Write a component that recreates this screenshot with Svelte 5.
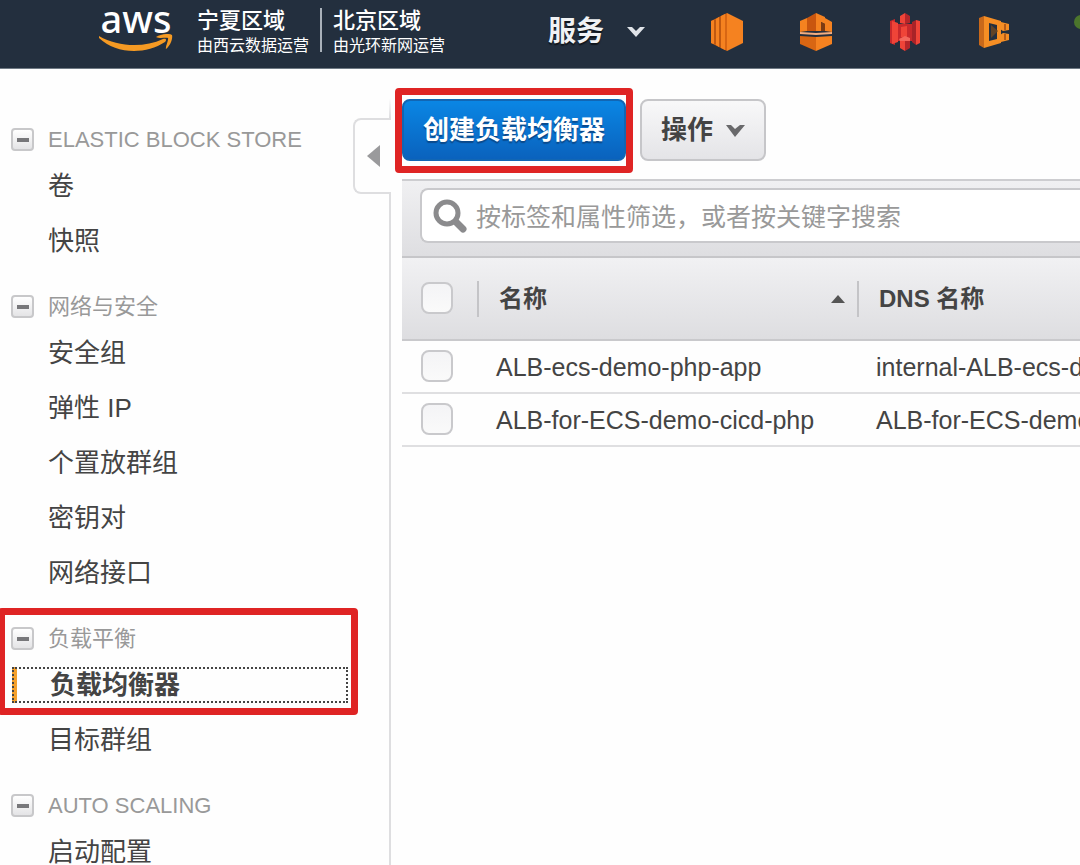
<script>
  let query = $state("");

  const regions = [
    { name: "宁夏区域", operator: "由西云数据运营" },
    { name: "北京区域", operator: "由光环新网运营" },
  ];

  const groups = [
    { title: "ELASTIC BLOCK STORE", items: ["卷", "快照"] },
    {
      title: "网络与安全",
      items: ["安全组", "弹性 IP", "个置放群组", "密钥对", "网络接口"],
    },
    {
      title: "负载平衡",
      items: ["负载均衡器", "目标群组"],
      marked: true,
    },
    { title: "AUTO SCALING", items: ["启动配置"] },
  ];

  const active = "负载均衡器";

  const balancers = [
    { name: "ALB-ecs-demo-php-app", dns: "internal-ALB-ecs-d" },
    { name: "ALB-for-ECS-demo-cicd-php", dns: "ALB-for-ECS-demo" },
  ];
</script>

<div class="console">
  <header>
    <a class="logo" href="#home" aria-label="aws">
      <span>aws</span>
      <svg width="76" height="20" viewBox="0 0 76 20">
        <path
          d="M1 2 C20 13 46 14 65 5 C68 4 69 6 67 8 C47 21 18 20 1 4 Z"
          fill="#f59a23"
        />
        <path
          d="M58 3 C63 0 71 -1 74 1 C75 5 72 12 68 15 C67 13 71 6 70 4 C68 3 62 5 58 3 Z"
          fill="#f59a23"
        />
      </svg>
    </a>
    <div class="regions">
      {#each regions as region}
        <div class="region">
          <strong>{region.name}</strong>
          <small>{region.operator}</small>
        </div>
      {/each}
    </div>
    <button class="services">
      服务
      <svg width="18" height="11" viewBox="0 0 18 11">
        <path d="M0 0 H5 L9 4 L13 0 H18 L9 10 Z" fill="#dfe3e8" />
      </svg>
    </button>
    <nav class="shortcuts" aria-label="快捷方式">
      <a href="#ec2" aria-label="EC2">
        <svg width="34" height="40" viewBox="0 0 34 40">
          <path d="M17 1 L1 9 V31 L17 39 Z" fill="#d86613" />
          <path d="M17 1 L33 9 V31 L17 39 Z" fill="#f58220" />
          <path d="M1 9 L4 8 V32 L1 31 Z M6 7 L9 5 V35 L6 33 Z" fill="#f58220" />
          <path d="M11 4 L15 2 V38 L11 36 Z" fill="#f58220" />
          <path d="M5 8 V32 M10 5 V35" stroke="#a84c10" />
        </svg>
      </a>
      <a href="#vpc" aria-label="VPC">
        <svg width="34" height="40" viewBox="0 0 34 40">
          <path d="M1 9 L8 6 V19 L1 20 Z" fill="#f58220" />
          <path d="M8 6 L17 1 V19 H8 Z" fill="#c9560f" />
          <path d="M17 1 L26 5 V12 L22 10 V19 H17 Z" fill="#f58220" />
          <path d="M22 10 L26 12 V19 H22 Z" fill="#7d3b12" />
          <path d="M26 6 L33 10 V20 L26 19 Z" fill="#f58220" />
          <path d="M1 20 L17 21 L33 20 V22 L17 23 L1 22 Z" fill="#f3ae80" />
          <path d="M1 24 L17 25 V39 L1 32 Z" fill="#d86613" />
          <path d="M17 25 L33 24 V32 L17 39 Z" fill="#f58220" />
        </svg>
      </a>
      <a href="#s3" aria-label="S3">
        <svg width="34" height="40" viewBox="0 0 34 40">
          <path d="M2 9 L7 7 V33 L2 31 Z" fill="#c8292c" />
          <path d="M4 9 L10 11 V30 L4 32 Z" fill="#ef4438" />
          <path d="M10 12 H24 V29 H10 Z" fill="#c8292c" />
          <path d="M24 10 L28 8 V33 L24 30 Z" fill="#a92328" />
          <path d="M28 8 L32 9 V31 L28 33 Z" fill="#ef4438" />
          <path d="M12 4 L17 1 V12 L12 11 Z M12 29 L17 28 V39 L12 36 Z" fill="#ef4438" />
          <path d="M17 1 L22 4 V11 L17 12 Z M17 28 L22 29 V36 L17 39 Z" fill="#b5262a" />
          <path d="M13 15 L19 14 V26 L13 25 Z" fill="#ef4438" />
          <path d="M11 27 L17 24 L22 26 V29 H12 Z" fill="#f4675c" />
        </svg>
      </a>
      <a href="#ecs" aria-label="ECS">
        <svg width="34" height="40" viewBox="0 0 34 40">
          <path d="M2 6 L7 4 V36 L2 33 Z" fill="#c9691a" />
          <path
            fill-rule="evenodd"
            d="M7 4 L24 9 V31 L7 36 Z M12 11 V29 L20 27 V13 Z"
            fill="#f58e24"
          />
          <path d="M14 13 L21 19 L14 26 Z" fill="#604326" />
          <path d="M24 10 L32 12 V18 L26 19 L23 17 Z" fill="#f58e24" />
          <path d="M24 30 L32 28 V22 L26 21 L23 23 Z" fill="#f58e24" />
          <path d="M28 12 V18 M28 22 V28" stroke="#b65b17" stroke-width="2" />
        </svg>
      </a>
      <a href="#more" aria-label="IoT">
        <svg width="34" height="40" viewBox="0 0 34 40">
          <path d="M17 16 V36" stroke="#3f5a45" stroke-width="4" />
          <circle cx="15" cy="10" r="7" fill="#4c762c" />
        </svg>
      </a>
    </nav>
  </header>

  <div class="body">
    <aside>
      {#each groups as group}
        <section class:marked={group.marked}>
          <h2>
            <button class="fold" aria-label="折叠 {group.title}"></button>
            {group.title}
          </h2>
          <ul>
            {#each group.items as item}
              <li>
                <a href="#{item}" class:active={item === active}>{item}</a>
              </li>
            {/each}
          </ul>
        </section>
      {/each}
      <button class="collapse" aria-label="收起">
        <svg width="13" height="22" viewBox="0 0 13 22">
          <path d="M13 0 V22 L0 11 Z" fill="#9a9a9c" />
        </svg>
      </button>
    </aside>

    <main>
      <div class="actions">
        <div class="callout">
          <button class="btn primary">创建负载均衡器</button>
        </div>
        <button class="btn">
          操作
          <svg width="19" height="13" viewBox="0 0 19 13">
            <path d="M0 1 H5 L9 5 L14 1 H19 L9 13 Z" fill="#69696b" />
          </svg>
        </button>
      </div>

      <div class="filter">
        <label class="search">
          <svg width="36" height="36" viewBox="0 0 36 36" fill="none" stroke="#8b8b8d">
            <circle cx="15" cy="15" r="11" stroke-width="5" />
            <path d="M24 24 L31 31" stroke-width="7" stroke-linecap="round" />
          </svg>
          <input
            type="text"
            bind:value={query}
            aria-label="搜索"
            placeholder="按标签和属性筛选，或者按关键字搜索"
          />
        </label>
      </div>

      <table>
        <thead>
          <tr>
            <th class="check"><input type="checkbox" aria-label="全选" /></th>
            <th class="name">
              <div class="cell">
                名称
                <svg width="14" height="8" viewBox="0 0 14 8">
                  <path d="M7 0 L14 8 H0 Z" fill="#555" />
                </svg>
              </div>
            </th>
            <th><div class="cell">DNS 名称</div></th>
          </tr>
        </thead>
        <tbody>
          {#each balancers as balancer}
            <tr>
              <td class="check">
                <input type="checkbox" aria-label={balancer.name} />
              </td>
              <td>{balancer.name}</td>
              <td>{balancer.dns}</td>
            </tr>
          {/each}
        </tbody>
      </table>
    </main>
  </div>
</div>

<style>
  :global(body) {
    background: #fefefe;
  }

  .console {
    display: flex;
    flex-direction: column;
    height: 100vh;
    overflow: hidden;
    font-family: "Liberation Sans", "Noto Sans CJK SC", sans-serif;
    color: #444;
  }

  button,
  input {
    font-family: inherit;
    color: inherit;
  }

  a {
    color: inherit;
    text-decoration: none;
  }

  svg {
    display: block;
    flex: none;
  }

  /* top bar */
  header {
    display: flex;
    flex: none;
    height: 69px;
    box-sizing: border-box;
    padding-left: 98px;
    overflow: hidden;
    background: #232f3e;
    border-bottom: 1px solid #6f7a84;
    color: #fff;
  }

  .logo {
    width: 76px;
    flex: none;
    text-align: center;
  }

  .logo span {
    display: block;
    height: 34px;
    font: 500 38px/36px "Noto Sans", sans-serif;
  }

  .regions {
    display: flex;
    flex: none;
    width: 351px;
    padding: 8px 0 0 23px;
  }

  .region {
    height: 44px;
    white-space: nowrap;
  }

  .region + .region {
    margin-left: 11px;
    padding-left: 11px;
    border-left: 2px solid #a9b1ba;
  }

  .region strong,
  .region small {
    display: block;
    font-size: 22px;
    font-weight: 500;
    line-height: 25px;
  }

  .region small {
    font-size: 16px;
    font-weight: 400;
  }

  .services {
    display: flex;
    flex: none;
    align-items: center;
    gap: 23px;
    width: 162px;
    height: 64px;
    padding: 0;
    border: 0;
    background: none;
    font-size: 28px;
    font-weight: 700;
    line-height: 36px;
    color: #f0f2f4;
    text-shadow: 0 2px 1px #10161d;
  }

  .shortcuts {
    display: flex;
    align-items: center;
    gap: 55px;
    height: 64px;
  }

  .body {
    display: flex;
    flex: 1;
    min-height: 0;
  }

  /* navigation */
  aside {
    position: relative;
    flex: none;
    box-sizing: border-box;
    width: 391px;
    padding-top: 52px;
    border-right: 2px solid #dedee0;
    border-image: linear-gradient(transparent 30px, #dedee0 50px) 1;
  }

  section {
    position: relative;
    padding-bottom: 20px;
  }

  .marked::after {
    content: "";
    position: absolute;
    inset: -12px 31px auto -2px;
    height: 93px;
    border: 7px solid #df2424;
    border-radius: 4px;
    pointer-events: none;
  }

  h2 {
    display: flex;
    align-items: center;
    gap: 14px;
    height: 37px;
    margin: 0;
    padding-left: 11px;
    font-size: 22px;
    font-weight: 400;
    line-height: 37px;
    color: #999;
  }

  .fold {
    display: flex;
    align-items: center;
    justify-content: center;
    width: 23px;
    height: 23px;
    padding: 0;
    border: 2px solid #c8c8ca;
    border-radius: 4px;
    background: linear-gradient(#fff, #e4e4e6);
  }

  .fold::before {
    content: "";
    width: 12px;
    height: 4px;
    background: #77777a;
  }

  ul {
    margin: 0;
    padding: 0;
    list-style: none;
  }

  li {
    display: flex;
    align-items: center;
    height: 55px;
    padding: 0 41px 0 12px;
  }

  li a {
    flex: 1;
    box-sizing: border-box;
    height: 36px;
    padding-left: 36px;
    font-size: 26px;
    line-height: 36px;
  }

  li a.active {
    border: 2px dotted #444;
    background: linear-gradient(#f5a12c, #f5a12c) 0 0 / 5px 100% no-repeat border-box;
    line-height: 32px;
    font-weight: 700;
  }

  .collapse {
    position: absolute;
    top: 49px;
    right: -2px;
    display: flex;
    align-items: center;
    width: 38px;
    height: 76px;
    padding: 0 0 0 12px;
    border: 2px solid #dedee0;
    border-right: 0;
    border-radius: 8px 0 0 8px;
    background: #fefefe;
  }

  /* content */
  main {
    flex: 1;
    min-width: 0;
    padding-left: 11px;
  }

  .actions {
    display: flex;
    align-items: flex-start;
    gap: 14px;
    padding: 30px 0 18px;
  }

  .callout {
    position: relative;
  }

  .callout::after {
    content: "";
    position: absolute;
    inset: -11px -7px -12px -7px;
    border: 7px solid #df2424;
    border-radius: 4px;
    pointer-events: none;
  }

  .btn {
    display: flex;
    align-items: center;
    gap: 13px;
    height: 62px;
    padding: 0 19px;
    border: 2px solid #c6c6c9;
    border-radius: 8px;
    background: linear-gradient(#f8f8f9, #e4e4e7);
    font-size: 26px;
    font-weight: 700;
    line-height: 36px;
    white-space: nowrap;
  }

  .primary {
    border-color: #1166b4;
    background: linear-gradient(#0a86e4, #0a62bd);
    color: #fff;
    text-shadow: 0 2px 1px #0a4a8c;
  }

  .filter {
    padding: 7px 0 13px 18px;
    border-top: 2px solid #cdcdd0;
    border-bottom: 2px solid #c6c6c9;
    background: linear-gradient(#f0f0f2, #dedee1);
  }

  .search {
    display: flex;
    align-items: center;
    gap: 8px;
    height: 51px;
    padding-left: 10px;
    border: 2px solid #c9c9cc;
    border-right: 0;
    border-radius: 8px 0 0 8px;
    background: #fff;
  }

  .search input {
    flex: 1;
    min-width: 0;
    height: 44px;
    padding: 4px 0 0;
    border: 0;
    outline: 0;
    background: none;
    font-size: 25px;
  }

  .search input::placeholder {
    color: #999;
  }

  table {
    width: 100%;
    table-layout: fixed;
    border-collapse: separate;
    border-spacing: 0;
    font-size: 25px;
  }

  thead tr {
    background: linear-gradient(#f1f1f3, #dddde0);
  }

  th {
    height: 80px;
    padding: 0;
    border-bottom: 2px solid #c9c9cc;
    font-size: 24px;
    text-align: left;
    white-space: nowrap;
  }

  td {
    height: 50px;
    padding: 1px 0 0 19px;
    border-bottom: 2px solid #dfdfe1;
    overflow: hidden;
    white-space: nowrap;
  }

  .check {
    width: 56px;
    padding: 0 0 1px 19px;
  }

  .name {
    width: 380px;
  }

  .cell {
    display: flex;
    align-items: center;
    justify-content: space-between;
    height: 36px;
    padding: 0 12px 0 20px;
    border-left: 2px solid #c4c4c7;
    line-height: 36px;
  }

  input[type="checkbox"] {
    display: block;
    appearance: none;
    box-sizing: border-box;
    width: 32px;
    height: 32px;
    margin: 0;
    border: 2px solid #c9c9cc;
    border-radius: 8px;
    background: linear-gradient(#f4f4f6, #fafafa);
  }

  input[type="checkbox"]:checked {
    background: #1473cc;
  }
</style>
